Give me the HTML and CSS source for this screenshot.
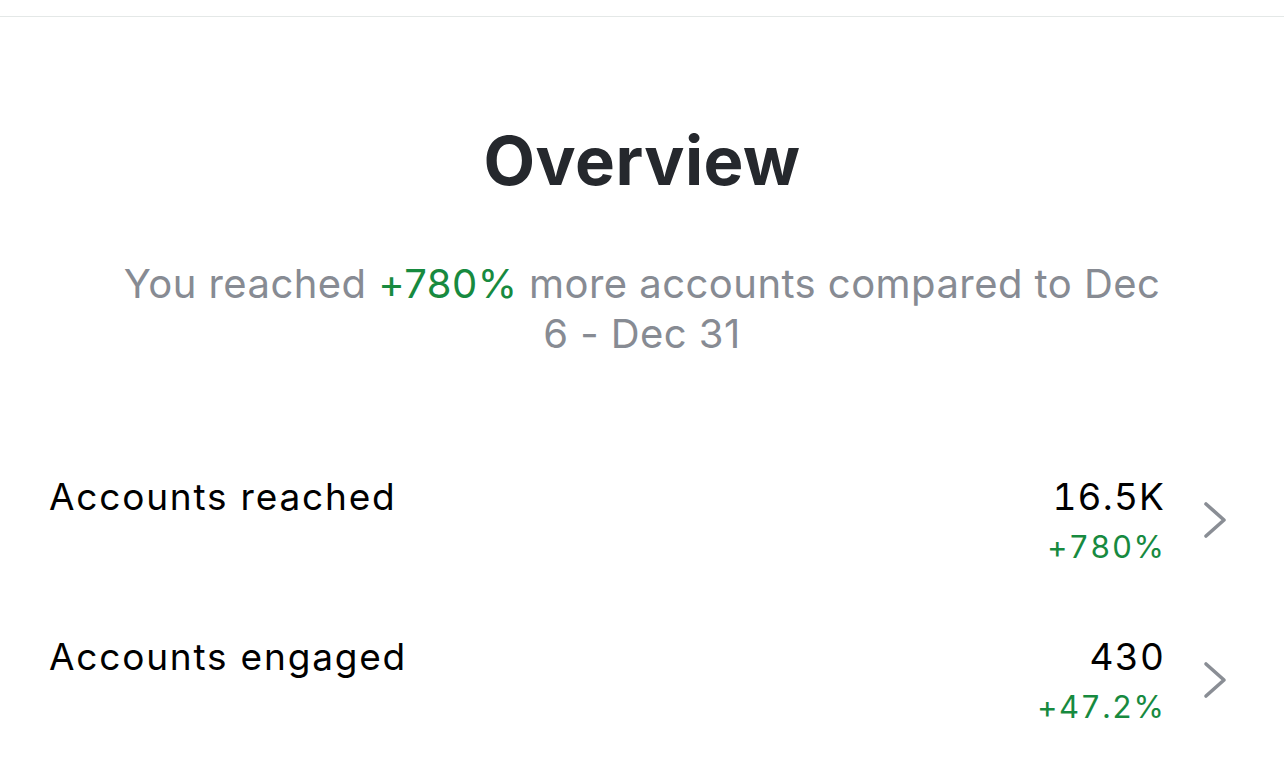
FILE: index.html
```html
<!DOCTYPE html>
<html lang="en">
<head>
<meta charset="utf-8">
<title>Overview</title>
<link rel="stylesheet" href="styles.css">
</head>
<body>
<div class="topbar"></div>
<main class="page">
  <h1 class="title">Overview</h1>
  <p class="summary">You reached <span class="up">+780%</span> more accounts compared to Dec 6 - Dec 31</p>
  <ul class="metrics">
    <li class="metric">
      <span class="label">Accounts reached</span>
      <span class="values">
        <span class="value">16.5K</span>
        <span class="delta">+780%</span>
      </span>
      <svg class="chev" viewBox="0 0 24 38" width="24" height="38" aria-hidden="true"><path d="M3 3 L21 19 L3 35" fill="none" stroke="#8a8e95" stroke-width="3.6" stroke-linecap="round" stroke-linejoin="round"/></svg>
    </li>
    <li class="metric">
      <span class="label">Accounts engaged</span>
      <span class="values">
        <span class="value">430</span>
        <span class="delta">+47.2%</span>
      </span>
      <svg class="chev" viewBox="0 0 24 38" width="24" height="38" aria-hidden="true"><path d="M3 3 L21 19 L3 35" fill="none" stroke="#8a8e95" stroke-width="3.6" stroke-linecap="round" stroke-linejoin="round"/></svg>
    </li>
  </ul>
</main>
</body>
</html>
```
FILE: styles.css
```css
* { box-sizing: border-box; }
html, body {
  margin: 0;
  padding: 0;
  background: #ffffff;
}
body {
  font-family: Inter, "Noto Sans", "Liberation Sans", sans-serif;
  color: #000;
  overflow: hidden;
}
.topbar {
  height: 17px;
  border-bottom: 1px solid #e4e8e7;
}
.page {
  display: flex;
  flex-direction: column;
  align-items: center;
}
.title {
  margin: 104px 0 0;
  font-size: 67px;
  line-height: 80px;
  font-weight: 700;
  color: #25282d;
  letter-spacing: 0.5px;
}
.summary {
  margin: 58px 0 0;
  width: 1050px;
  text-align: center;
  font-size: 40px;
  line-height: 50px;
  letter-spacing: 0.45px;
  color: #878b93;
}
.up { color: #178a3f; }
.metrics {
  list-style: none;
  margin: 116px 0 0;
  padding: 0 57px 0 49px;
  width: 100%;
  display: flex;
  flex-direction: column;
  gap: 70px;
}
.metric {
  display: flex;
  align-items: center;
}
.label {
  flex: 1;
  font-size: 37px;
  line-height: 44px;
  letter-spacing: 1.8px;
  align-self: flex-start;
}
.values {
  display: flex;
  flex-direction: column;
  align-items: flex-end;
  font-feature-settings: "tnum" 1;
}
.value {
  font-size: 37px;
  line-height: 44px;
  letter-spacing: 1.2px;
  margin-right: -1.2px;
}
.delta {
  padding-top: 10px;
  font-size: 31px;
  line-height: 36px;
  letter-spacing: 1.5px;
  margin-right: -1.5px;
  color: #178a3f;
}
.chev {
  margin-left: 39px;
  display: block;
}
```
